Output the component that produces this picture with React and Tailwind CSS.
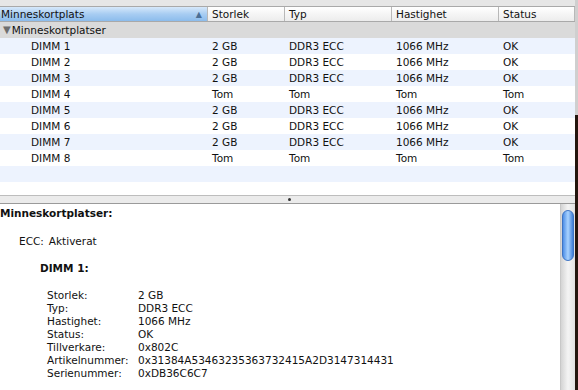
import React from "react";

const cols = [
  { title: "Minneskortplats", w: "w-[208px]" },
  { title: "Storlek", w: "w-[77px]" },
  { title: "Typ", w: "w-[107px]" },
  { title: "Hastighet", w: "w-[107px]" },
  { title: "Status", w: "w-[76px]" },
];

const rows = [
  ["DIMM 1", "2 GB", "DDR3 ECC", "1066 MHz", "OK"],
  ["DIMM 2", "2 GB", "DDR3 ECC", "1066 MHz", "OK"],
  ["DIMM 3", "2 GB", "DDR3 ECC", "1066 MHz", "OK"],
  ["DIMM 4", "Tom", "Tom", "Tom", "Tom"],
  ["DIMM 5", "2 GB", "DDR3 ECC", "1066 MHz", "OK"],
  ["DIMM 6", "2 GB", "DDR3 ECC", "1066 MHz", "OK"],
  ["DIMM 7", "2 GB", "DDR3 ECC", "1066 MHz", "OK"],
  ["DIMM 8", "Tom", "Tom", "Tom", "Tom"],
];

const details = [
  ["Storlek:", "2 GB"],
  ["Typ:", "DDR3 ECC"],
  ["Hastighet:", "1066 MHz"],
  ["Status:", "OK"],
  ["Tillverkare:", "0x802C"],
  ["Artikelnummer:", "0x31384A53463235363732415A2D3147314431"],
  ["Serienummer:", "0xDB36C6C7"],
];

export default function App() {
  return (
    <div className="flex w-[578px] h-[390px] overflow-hidden bg-white text-[10.5px] leading-[13px] text-[#111] font-['DejaVu_Sans',sans-serif]">
      <div className="flex flex-col w-[575px]">
        {/* top strip */}
        <div className="h-[6px] bg-[#e6e6e6]" />

        {/* header */}
        <div className="flex h-[16px] border-y border-[#a9a9a9]">
          {cols.map((c, i) => (
            <div
              key={c.title}
              className={`${c.w} flex items-center justify-between px-[1px] border-r border-[#b8b8b8] ${
                i === 0
                  ? "bg-gradient-to-b from-[#d6e8fa] via-[#a8cdf2] to-[#8cbcec]"
                  : "bg-gradient-to-b from-white to-[#ececec] pl-[4px]"
              }`}
            >
              <span>{c.title}</span>
              {i === 0 && <span className="text-[8px] text-[#4b6f95] mr-[4px]">▲</span>}
            </div>
          ))}
          <div className="flex-1 bg-gradient-to-b from-white to-[#ececec]" />
        </div>

        {/* group row */}
        <div className="flex items-center h-[16px] bg-[#dadada]">
          <span className="text-[10px] leading-[10px] text-[#6e6e6e] ml-[3px] mr-[1px]">▼</span>
          <span>Minneskortplatser</span>
        </div>

        {/* data rows */}
        {rows.map((r, i) => (
          <div
            key={r[0]}
            className={`flex items-center h-[16px] ${i % 2 === 0 ? "bg-[#edf3fe]" : "bg-white"}`}
          >
            <div className="w-[208px] pl-[31px]">{r[0]}</div>
            <div className="w-[77px] pl-[4px]">{r[1]}</div>
            <div className="w-[107px] pl-[4px]">{r[2]}</div>
            <div className="w-[107px] pl-[4px]">{r[3]}</div>
            <div className="w-[76px] pl-[4px]">{r[4]}</div>
          </div>
        ))}
        <div className="h-[16px] bg-[#edf3fe]" />
        <div className="h-[13px] bg-white" />

        {/* splitter */}
        <div className="flex items-center justify-center h-[9px] bg-[#ebebeb] border-t border-[#bdbdbd] border-b border-b-[#9a9a9a]">
          <div className="w-[3px] h-[3px] rounded-full bg-[#333] ml-[4px]" />
        </div>

        {/* detail pane */}
        <div className="flex flex-1 min-h-0">
          <div className="flex-1 pt-[3px]">
            <div className="font-bold">Minneskortplatser:</div>
            <div className="mt-[15px] pl-[19px] flex gap-[5px]">
              <span>ECC:</span>
              <span>Aktiverat</span>
            </div>
            <div className="mt-[14px] pl-[40px] font-bold">DIMM 1:</div>
            <div className="mt-[14px] pl-[47px] flex flex-col">
              {details.map(([k, v]) => (
                <div key={k} className="flex">
                  <span className="w-[91px] shrink-0">{k}</span>
                  <span>{v}</span>
                </div>
              ))}
            </div>
          </div>
          {/* scrollbar */}
          <div className="w-[15px] bg-gradient-to-r from-[#d4d4d4] via-[#f4f4f4] to-[#e2e2e2] border-l border-[#c8c8c8] pt-[6px] px-[1px]">
            <div className="h-[51px] rounded-full border border-[#3d74c4] bg-gradient-to-r from-[#4d8ee6] via-[#a9d3ff] to-[#3f7fd8]" />
          </div>
        </div>
      </div>

      {/* desktop behind the window */}
      <div className="flex flex-col w-[3px]">
        <div className="h-[115px] bg-[#cfcfcf]" />
        <div className="flex-1 bg-[#24160e]" />
      </div>
    </div>
  );
}
